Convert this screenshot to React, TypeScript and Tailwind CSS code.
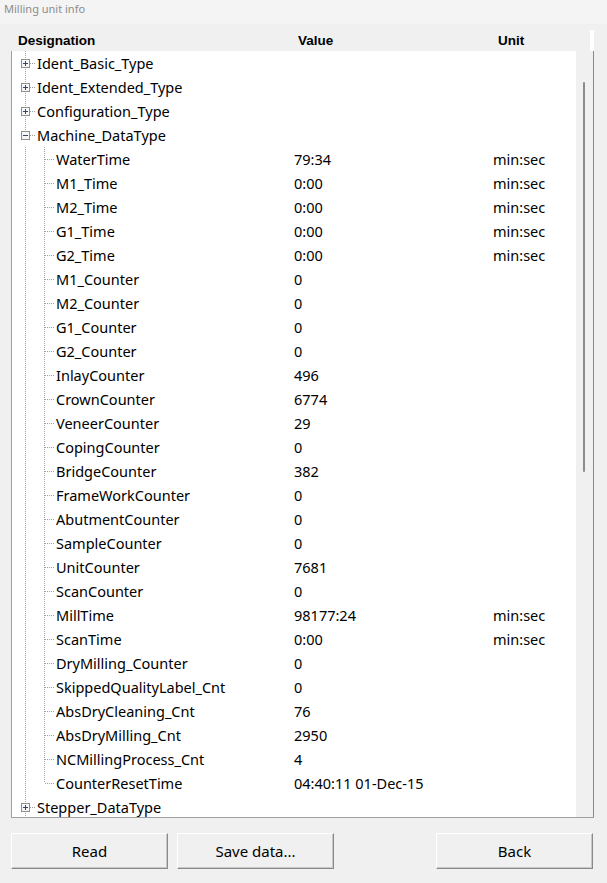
import React from 'react';

type Item = {
  label: string;
  value?: string;
  unit?: string;
  level: 0 | 1;
  expand?: 'plus' | 'minus';
  last?: boolean;
};

const MACHINE: [string, string, string?][] = [
  ['WaterTime', '79:34', 'min:sec'],
  ['M1_Time', '0:00', 'min:sec'],
  ['M2_Time', '0:00', 'min:sec'],
  ['G1_Time', '0:00', 'min:sec'],
  ['G2_Time', '0:00', 'min:sec'],
  ['M1_Counter', '0'],
  ['M2_Counter', '0'],
  ['G1_Counter', '0'],
  ['G2_Counter', '0'],
  ['InlayCounter', '496'],
  ['CrownCounter', '6774'],
  ['VeneerCounter', '29'],
  ['CopingCounter', '0'],
  ['BridgeCounter', '382'],
  ['FrameWorkCounter', '0'],
  ['AbutmentCounter', '0'],
  ['SampleCounter', '0'],
  ['UnitCounter', '7681'],
  ['ScanCounter', '0'],
  ['MillTime', '98177:24', 'min:sec'],
  ['ScanTime', '0:00', 'min:sec'],
  ['DryMilling_Counter', '0'],
  ['SkippedQualityLabel_Cnt', '0'],
  ['AbsDryCleaning_Cnt', '76'],
  ['AbsDryMilling_Cnt', '2950'],
  ['NCMillingProcess_Cnt', '4'],
  ['CounterResetTime', '04:40:11 01-Dec-15'],
];

const ITEMS: Item[] = [
  { label: 'Ident_Basic_Type', level: 0, expand: 'plus' },
  { label: 'Ident_Extended_Type', level: 0, expand: 'plus' },
  { label: 'Configuration_Type', level: 0, expand: 'plus' },
  { label: 'Machine_DataType', level: 0, expand: 'minus' },
  ...MACHINE.map(([label, value, unit], i) => ({
    label, value, unit, level: 1 as const, last: i === MACHINE.length - 1,
  })),
  { label: 'Stepper_DataType', level: 0, expand: 'plus' },
];

const DOT = '#a0a0a0';

// tree connector drawing for one row
function TreeGuide({ item }: { item: Item }) {
  const w = item.level === 0 ? 25 : 44;
  return (
    <svg width={w} height={24} className="shrink-0" shapeRendering="crispEdges">
      {/* root level vertical line */}
      <line x1={13.5} y1={0} x2={13.5} y2={24} stroke={DOT} strokeDasharray="1 1" />
      {item.level === 0 && (
        <>
          <line x1={18} y1={12.5} x2={24} y2={12.5} stroke={DOT} strokeDasharray="1 1" />
          <rect x={9.5} y={8.5} width={8} height={8} fill="#f7f7f7" stroke="#8e8f8f" />
          <line x1={11} y1={12.5} x2={16} y2={12.5} stroke="#2c4a6e" />
          {item.expand === 'plus' && (
            <line x1={13.5} y1={10} x2={13.5} y2={15} stroke="#2c4a6e" />
          )}
          {item.expand === 'minus' && (
            <line x1={13.5} y1={17} x2={13.5} y2={24} stroke="#ffffff" />
          )}
        </>
      )}
      {item.level === 1 && (
        <>
          <line x1={32.5} y1={0} x2={32.5} y2={item.last ? 12 : 24} stroke={DOT} strokeDasharray="1 1" />
          <line x1={33} y1={12.5} x2={43} y2={12.5} stroke={DOT} strokeDasharray="1 1" />
        </>
      )}
    </svg>
  );
}

function Row({ item }: { item: Item }) {
  const labelW = item.level === 0 ? 257 : 238;
  return (
    <div className="flex items-center h-[24px] whitespace-nowrap">
      <TreeGuide item={item} />
      <div className="shrink-0" style={{ width: labelW }}>{item.label}</div>
      <div className="w-[199px] shrink-0">{item.value}</div>
      <div>{item.unit}</div>
    </div>
  );
}

function WinButton({ label }: { label: string }) {
  return (
    <button className="h-[36px] w-[157px] bg-[#f0f0f0] border border-t-white border-l-white border-r-[#8a8a8a] border-b-[#8a8a8a] shadow-[inset_-1px_-1px_0_#c8c8c8] text-[15px] text-black">
      {label}
    </button>
  );
}

export default function App() {
  return (
    <div className="w-[607px] h-[883px] bg-[#f0f0f0] overflow-hidden font-['Noto_Sans',sans-serif] text-black">
      <div className="h-[24px] bg-[#f4f4f4] pl-[4px] pt-[1px] text-[11px] leading-[16px] text-[#8c8c8c]">
        Milling unit info
      </div>

      <div className="ml-[11px] w-[583px] h-[794px] flex flex-col">
        {/* header */}
        <div className="h-[27px] flex shrink-0 font-['Liberation_Sans',sans-serif] font-bold text-[13.5px] leading-[16px]">
          <div className="flex-1 flex pl-[7px] pt-[9px]">
            <div className="w-[280px]">Designation</div>
            <div className="w-[200px]">Value</div>
            <div>Unit</div>
          </div>
          <div className="w-[4px] mt-[6px] bg-white" />
        </div>

        {/* body */}
        <div className="flex-1 flex min-h-0 border-l border-b border-[#a0a0a0]">
          <div className="w-[564px] bg-white overflow-hidden pt-[0px] text-[14.5px] leading-[20px]">
            {ITEMS.map((it) => (
              <Row key={it.label} item={it} />
            ))}
          </div>
          <div className="w-[17px] bg-[#f0f0f0] pt-[31px] pl-[7px] mb-[2px]">
            <div className="w-[2px] h-[390px] bg-[#8b8b8b] rounded-full" />
          </div>
          <div className="w-[1px] bg-[#8a8a8a]" />
        </div>
      </div>

      <div className="flex pl-[11px] pr-[14px] mt-[15px] gap-[9px]">
        <WinButton label="Read" />
        <WinButton label="Save data..." />
        <div className="flex-1" />
        <WinButton label="Back" />
      </div>
    </div>
  );
}
